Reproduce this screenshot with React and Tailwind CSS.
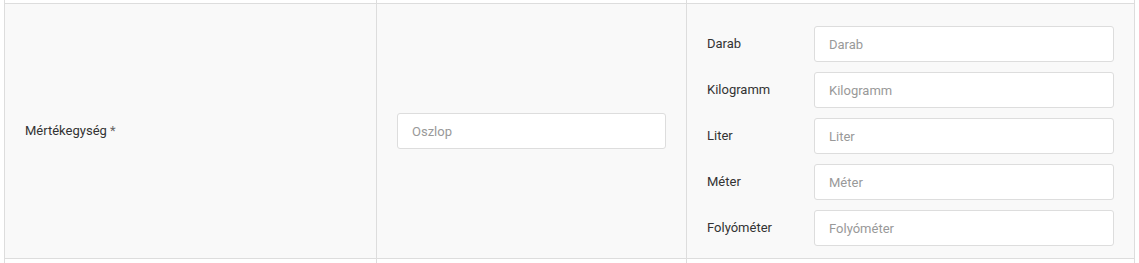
import React from "react";

const units = ["Darab", "Kilogramm", "Liter", "Méter", "Folyóméter"];

function Field({ placeholder, className = "" }) {
  return (
    <input
      type="text"
      placeholder={placeholder}
      className={
        "h-[36px] rounded-[3px] border border-[#dddddd] bg-white pl-[14px] pr-[14px] text-[13px] text-[#333333] placeholder:text-[#999999] outline-none " +
        className
      }
      style={{ fontFamily: "Roboto, 'Liberation Sans', sans-serif" }}
    />
  );
}

export default function App() {
  return (
    <div
      className="w-[1139px] h-[263px] bg-white overflow-hidden text-[13px] text-[#333333]"
      style={{ fontFamily: "Roboto, 'Liberation Sans', sans-serif" }}
    >
      <div className="ml-[4px] w-[1131px] border-l border-r border-[#dddddd]">
        {/* previous row slice */}
        <div className="grid grid-cols-[371px_310px_448px] h-[3px] bg-white">
          <div />
          <div className="border-l border-[#dddddd]" />
          <div className="border-l border-[#dddddd]" />
        </div>
        {/* main row */}
        <div className="grid grid-cols-[371px_310px_448px] border-t border-b border-[#dddddd] bg-[#f9f9f9]">
          <div className="flex items-center pl-[20px] h-[254px]">
            <span>
              Mértékegység <span className="text-[#666666]">*</span>
            </span>
          </div>
          <div className="flex items-center border-l border-[#dddddd] pl-[20px] pr-[20px]">
            <Field placeholder="Oszlop" className="w-[269px]" />
          </div>
          <div className="border-l border-[#dddddd] pl-[20px] pr-[20px] pt-[22px] pb-[12px] flex flex-col gap-[10px]">
            {units.map((u) => (
              <div key={u} className="flex items-center">
                <label className="w-[107px] shrink-0">{u}</label>
                <Field placeholder={u} className="w-[300px]" />
              </div>
            ))}
          </div>
        </div>
        {/* next row slice */}
        <div className="grid grid-cols-[371px_310px_448px] h-[10px] bg-white">
          <div />
          <div className="border-l border-[#dddddd]" />
          <div className="border-l border-[#dddddd]" />
        </div>
      </div>
    </div>
  );
}
